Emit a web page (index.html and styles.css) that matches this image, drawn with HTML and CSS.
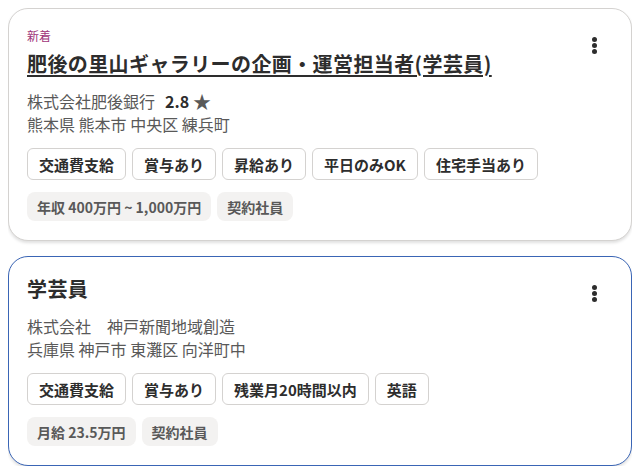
FILE: index.html
```html
<!DOCTYPE html>
<html lang="ja">
<head>
<meta charset="utf-8">
<link rel="stylesheet" href="styles.css">
</head>
<body>
<div class="list">
  <div class="card">
    <div class="new">新着</div>
    <h2 class="title"><a href="#">肥後の里山ギャラリーの企画・運営担当者(学芸員)</a></h2>
    <div class="company">株式会社肥後銀行<span class="rating">2.8</span><span class="star">★</span></div>
    <div class="loc">熊本県 熊本市 中央区 練兵町</div>
    <div class="tags">
      <span class="tag">交通費支給</span>
      <span class="tag">賞与あり</span>
      <span class="tag">昇給あり</span>
      <span class="tag">平日のみOK</span>
      <span class="tag">住宅手当あり</span>
    </div>
    <div class="pills">
      <span class="pill">年収 400万円 ~ 1,000万円</span>
      <span class="pill">契約社員</span>
    </div>
    <button class="kebab" aria-label="menu"><i></i><i></i><i></i></button>
  </div>
  <div class="card selected">
    <h2 class="title">学芸員</h2>
    <div class="company">株式会社　神戸新聞地域創造</div>
    <div class="loc">兵庫県 神戸市 東灘区 向洋町中</div>
    <div class="tags">
      <span class="tag">交通費支給</span>
      <span class="tag">賞与あり</span>
      <span class="tag">残業月20時間以内</span>
      <span class="tag">英語</span>
    </div>
    <div class="pills">
      <span class="pill">月給 23.5万円</span>
      <span class="pill">契約社員</span>
    </div>
    <button class="kebab" aria-label="menu"><i></i><i></i><i></i></button>
  </div>
</div>
</body>
</html>
```
FILE: styles.css
```css
* { box-sizing: border-box; }
body {
  margin: 8px;
  background: #fff;
  font-family: "Noto Sans CJK JP", "Noto Sans", sans-serif;
  color: #2d2d2d;
}
.list {
  display: flex;
  flex-direction: column;
  gap: 15px;
}
.card {
  position: relative;
  width: 624px;
  border: 1px solid #d4d2d0;
  border-radius: 20px;
  padding: 18px 18px 19px;
  background: #fff;
  box-shadow: 0 2px 3px rgba(0,0,0,0.12);
}
.card.selected {
  border: 1.5px solid #3a65b5;
}
.new {
  font-size: 12px;
  line-height: 16px;
  color: #a0357a;
  margin-top: 1px;
  margin-bottom: 6px;
}
.title {
  margin: 0;
  font-size: 20px;
  line-height: 28px;
  font-weight: 700;
  letter-spacing: 0.4px;
}
.title a {
  color: #2d2d2d;
  text-decoration: underline;
  text-underline-offset: 3px;
  text-decoration-thickness: 2px;
}
.company {
  margin-top: 12px;
  font-size: 16px;
  line-height: 23px;
  height: 23px;
  color: #595959;
  display: flex;
  align-items: center;
}
.rating {
  font-weight: 700;
  color: #2d2d2d;
  margin-left: 10px;
}
.star {
  color: #595959;
  margin-left: 4px;
  font-size: 18px;
  line-height: 23px;
}
.loc {
  font-size: 16px;
  line-height: 23px;
  color: #595959;
}
.tags {
  display: flex;
  gap: 6px;
  margin-top: 12px;
}
.tag {
  border: 1px solid #d4d2d0;
  border-radius: 6px;
  padding: 0 11px;
  height: 32px;
  display: flex;
  align-items: center;
  font-size: 15px;
  font-weight: 700;
  color: #2d2d2d;
}
.pills {
  display: flex;
  gap: 6px;
  margin-top: 12px;
}
.pill {
  background: #f3f2f1;
  border-radius: 8px;
  padding: 0 10px;
  height: 29px;
  display: flex;
  align-items: center;
  font-size: 14px;
  font-weight: 700;
  color: #595959;
}
.kebab {
  position: absolute;
  top: 28px;
  right: 29px;
  width: 16px;
  height: 17px;
  border: 0;
  background: none;
  padding: 0;
  display: flex;
  flex-direction: column;
  align-items: center;
  justify-content: space-between;
}
.kebab i {
  display: block;
  width: 5px;
  height: 5px;
  border-radius: 50%;
  background: #2d2d2d;
}
```
